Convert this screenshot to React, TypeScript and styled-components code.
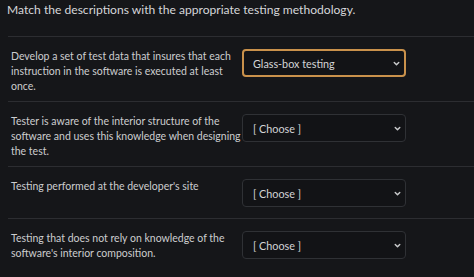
import React from 'react';
import styled, { createGlobalStyle } from 'styled-components';

const GlobalStyle = createGlobalStyle`
  html, body {
    margin: 0;
    padding: 0;
    background: #151619;
  }
  body {
    font-family: Lato, 'Open Sans', sans-serif;
  }
`;

const Page = styled.div`
  width: 474px;
  height: 277px;
  overflow: hidden;
  padding: 1px 0 0 8px;
  box-sizing: border-box;
  background: #151619;
  color: #cfd0d2;
`;

const Title = styled.div`
  font-size: 12.1px;
  line-height: 18px;
  margin-left: -1px;
  color: #d6d7d9;
  padding-bottom: 17px;
`;

const Row = styled.div`
  display: flex;
  align-items: flex-start;
  border-top: 1px solid #2c2d31;
  padding: 12px 0 7px 3px;
`;

const Description = styled.div`
  width: 233px;
  margin-right: -2px;
  flex: none;
  font-size: 10.5px;
  line-height: 15px;
  color: #cccdcf;
`;

const Select = styled.div<{ $focused?: boolean }>`
  width: 164px;
  height: 28px;
  box-sizing: border-box;
  margin-bottom: 4px;
  display: flex;
  align-items: center;
  justify-content: space-between;
  padding: 0 3px 0 ${(p) => (p.$focused ? '9px' : '10px')};
  border-radius: 4px;
  background: #121316;
  border: ${(p) => (p.$focused ? '2px solid #c9914b' : '1px solid #2f3135')};
  font-size: 10.8px;
  color: #d4d5d7;
`;

const Chevron = () => (
  <svg width="9" height="9" viewBox="0 0 10 10">
    <path d="M2.5 3.8 L5 6.3 L7.5 3.8" fill="none" stroke="#c9cacc" strokeWidth="1.6" strokeLinecap="round" strokeLinejoin="round" />
  </svg>
);

const rows = [
  {
    text: 'Develop a set of test data that insures that each instruction in the software is executed at least once.',
    value: 'Glass-box testing',
    focused: true,
  },
  {
    text: 'Tester is aware of the interior structure of the software and uses this knowledge when designing the test.',
    value: '[ Choose ]',
  },
  { text: "Testing performed at the developer's site", value: '[ Choose ]' },
  {
    text: "Testing that does not rely on knowledge of the software's interior composition.",
    value: '[ Choose ]',
  },
];

export default function App() {
  return (
    <>
      <GlobalStyle />
      <Page>
        <Title>Match the descriptions with the appropriate testing methodology.</Title>
        {rows.map((r, i) => (
          <Row key={i}>
            <Description>{r.text}</Description>
            <Select $focused={r.focused}>
              <span>{r.value}</span>
              <Chevron />
            </Select>
          </Row>
        ))}
      </Page>
    </>
  );
}
